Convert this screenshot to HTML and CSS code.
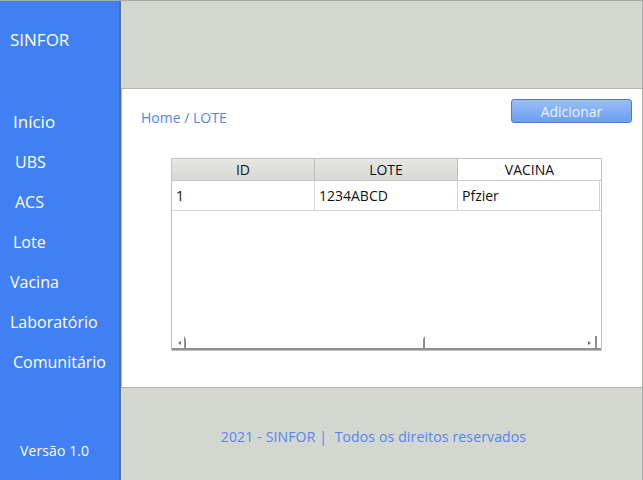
FILE: index.html
```html
<!DOCTYPE html>
<html>
<head>
<meta charset="utf-8">
<link rel="stylesheet" href="styles.css">
</head>
<body>
<div class="window">
  <aside class="sidebar">
    <div class="brand">SINFOR</div>
    <nav class="nav">
      <div class="nav-item i13">Início</div>
      <div class="nav-item i15 small">UBS</div>
      <div class="nav-item i15 small">ACS</div>
      <div class="nav-item i13 small">Lote</div>
      <div class="nav-item i10 small">Vacina</div>
      <div class="nav-item i10 small">Laboratório</div>
      <div class="nav-item i13 small">Comunitário</div>
    </nav>
    <div class="version">Versão 1.0</div>
  </aside>
  <main class="main">
    <div class="topbar"></div>
    <section class="panel">
      <div class="panel-head">
        <div class="crumb">Home / LOTE</div>
        <button class="btn">Adicionar</button>
      </div>
      <div class="table">
        <div class="thead">
          <div class="th">ID</div>
          <div class="th">LOTE</div>
          <div class="th active">VACINA</div>
        </div>
        <div class="trow">
          <div class="td">1</div>
          <div class="td">1234ABCD</div>
          <div class="td">Pfzier</div>
        </div>
        <div class="tbody-empty"></div>
        <div class="hscroll">
          <div class="arrow left"></div>
          <div class="thumb"></div>
          <div class="track"></div>
          <div class="corner"><div class="arrow right"></div></div>
        </div>
      </div>
    </section>
    <footer class="footer">2021 - SINFOR |&nbsp; Todos os direitos reservados</footer>
  </main>
</div>
</body>
</html>
```
FILE: styles.css
```css
* { box-sizing: border-box; }
html, body { margin: 0; padding: 0; }
body {
  font-family: "Open Sans", "Noto Sans", sans-serif;
  background: #d4d6d0;
}
.window {
  width: 643px;
  height: 480px;
  display: flex;
  border-top: 1px solid #a8aaa6;
  border-right: 1px solid #a8aaa6;
  background: #d4d6d0;
}
.sidebar {
  width: 121px;
  flex: none;
  background: #4080f2;
  border-right: 2px solid #5b6e8c;
  color: #fff;
  display: flex;
  flex-direction: column;
}
.brand {
  font-size: 17px;
  padding: 27px 0 0 10px;
  height: 103px;
}
.nav { display: flex; flex-direction: column; margin-top: -2px; }
.nav-item {
  height: 40px;
  font-size: 17px;
  line-height: 40px;
}
.nav-item.small { font-size: 16px; }
.i10 { padding-left: 10px; }
.i13 { padding-left: 13px; }
.i15 { padding-left: 15px; }
.version {
  margin-top: auto;
  padding: 0 0 20px 20px;
  font-size: 14px;
  letter-spacing: 0.1px;
}
.main {
  flex: 1;
  display: flex;
  flex-direction: column;
}
.topbar { height: 87px; }
.panel {
  height: 300px;
  background: #fff;
  border: 1px solid #b4b6b2;
  border-right: none;
  padding: 10px 10px 0 49px;
}
.panel-head {
  display: flex;
  justify-content: space-between;
  align-items: flex-start;
  height: 59px;
}
.crumb {
  color: #4d86f2;
  font-size: 14px;
  margin-top: 9px;
  margin-left: -30px;
}
.btn {
  width: 121px;
  height: 24px;
  border: 1px solid #4a7bd6;
  border-radius: 3px;
  background: linear-gradient(#9cbef9, #6c9ef3);
  color: #eef4ff;
  font-family: inherit;
  font-size: 14px;
  padding: 0;
}
.table {
  width: 431px;
  height: 193px;
  border: 1px solid #c4c4c4;
  display: flex;
  flex-direction: column;
}
.thead {
  display: grid;
  grid-template-columns: 143px 143px 143px;
  height: 22px;
  border-bottom: 1px solid #c8c8c8;
}
.th {
  background: linear-gradient(#e6e7e3, #d8d9d5);
  border-right: 1px solid #bdbdbd;
  font-size: 14px;
  text-align: center;
  line-height: 21px;
  color: #111;
}
.th.active { background: #fff; border-right: none; }
.trow {
  display: grid;
  grid-template-columns: 143px 143px 143px;
  height: 30px;
  border-bottom: 1px solid #d4d4d4;
}
.td {
  font-size: 14px;
  line-height: 29px;
  padding-left: 4px;
  border-right: 1px solid #d4d4d4;
  color: #111;
}
.trow .td:last-child { width: 142px; }
.tbody-empty { flex: 1; }
.hscroll {
  height: 14px;
  display: flex;
  align-items: stretch;
  border-bottom: 2px solid #8e8e8e;
}
.hscroll .arrow.left {
  width: 12px;
  position: relative;
}
.arrow.left::after {
  content: "";
  position: absolute;
  left: 6px;
  top: 5px;
  border-right: 3px solid #707070;
  border-top: 2px solid transparent;
  border-bottom: 2px solid transparent;
}
.thumb {
  width: 241px;
  border-left: 2px solid #8e8e8e;
  border-right: 2px solid #8e8e8e;
  border-top: 3px solid transparent;
}
.track { flex: 1; }
.corner {
  width: 10px;
  border-right: 2px solid #8e8e8e;
  position: relative;
  margin-right: 4px;
}
.arrow.right::after {
  content: "";
  position: absolute;
  left: 1px;
  top: 5px;
  border-left: 3px solid #707070;
  border-top: 2px solid transparent;
  border-bottom: 2px solid transparent;
}
.footer {
  flex: 1;
  color: #5287f0;
  font-size: 14px;
  text-align: center;
  padding-top: 39px;
  padding-right: 16px;
  letter-spacing: 0.15px;
}
```
